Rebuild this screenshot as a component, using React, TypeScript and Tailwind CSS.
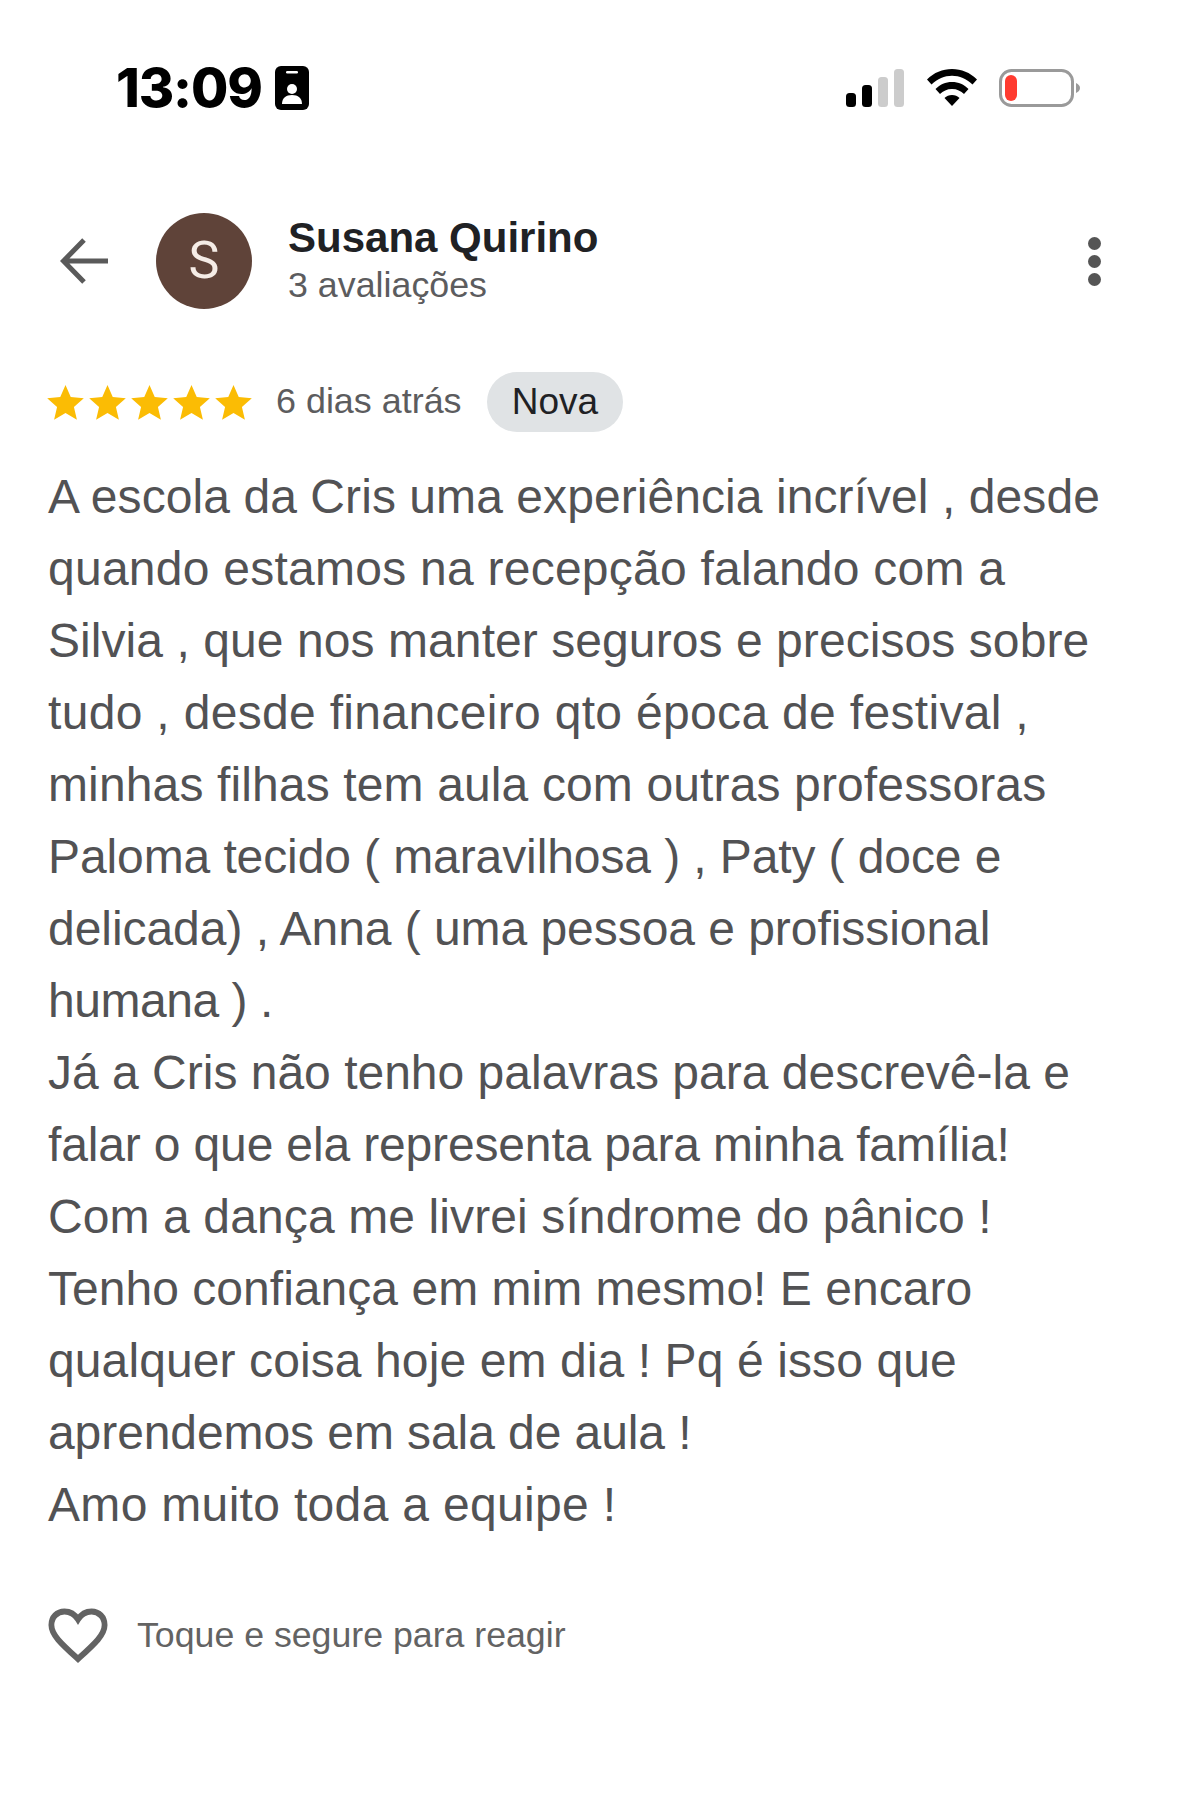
import React from 'react';

const lines = [
  { text: 'A escola da Cris uma experiência incrível , desde', cls: 'tracking-[0.07px]' },
  { text: 'quando estamos na recepção falando com a', cls: 'tracking-[0.25px]' },
  { text: 'Silvia , que nos manter seguros e precisos sobre', cls: 'tracking-[0.07px]' },
  { text: 'tudo , desde financeiro qto época de festival ,', cls: 'tracking-[0.32px]' },
  { text: 'minhas filhas tem aula com outras professoras', cls: 'tracking-[0.13px]' },
  { text: 'Paloma tecido ( maravilhosa ) , Paty ( doce e', cls: 'tracking-[-0.1px]' },
  { text: 'delicada) , Anna ( uma pessoa e profissional', cls: 'tracking-[-0.05px]' },
  { text: 'humana ) .', cls: 'tracking-[-0.46px]' },
  { text: 'Já a Cris não tenho palavras para descrevê-la e', cls: 'tracking-normal' },
  { text: 'falar o que ela representa para minha família!', cls: 'tracking-[-0.15px]' },
  { text: 'Com a dança me livrei síndrome do pânico !', cls: 'tracking-[0.11px]' },
  { text: 'Tenho confiança em mim mesmo! E encaro', cls: 'tracking-[0.03px]' },
  { text: 'qualquer coisa hoje em dia ! Pq é isso que', cls: 'tracking-[0.1px]' },
  { text: 'aprendemos em sala de aula !', cls: 'tracking-[-0.08px]' },
  { text: 'Amo muito toda a equipe !', cls: 'tracking-[0.32px]' },
];

const Star = () => (
  <svg viewBox="0 0 36 36" className="w-[37px] h-[37px] shrink-0">
    <path d="M18 1l5.100 11.700 12.700 1.200-9.600 8.400 2.900 12.500L18 28.200 6.900 34.800l2.900-12.500L.2 13.900l12.700-1.200z" fill="#fbbc04" />
  </svg>
);

const StatusBar = () => (
  <div className="h-[152px] flex items-center justify-between pl-[116px] pr-[98px] pt-[24px]">
    <div className="flex items-center gap-[13px]">
      <span className="text-[54px] leading-none font-extrabold text-black font-['Inter',sans-serif] tracking-[-1.1px]">13:09</span>
      <svg viewBox="0 0 34 44" className="w-[34px] h-[44px]">
        <rect width="34" height="44" rx="6" fill="#000" />
        <rect x="11" y="5" width="12" height="2.500" rx="1.200" fill="#fff" />
        <circle cx="17" cy="23" r="5" fill="#fff" />
        <path d="M7 38c0-6 4-9 10-9s10 3 10 9z" fill="#fff" />
      </svg>
    </div>
    <div className="flex items-center">
      <svg viewBox="0 0 60 38" className="w-[60px] h-[38px]">
        <rect x="0" y="24" width="10" height="14" rx="3.500" fill="#000" />
        <rect x="16" y="16" width="10" height="22" rx="3.500" fill="#000" />
        <rect x="32" y="8" width="10" height="30" rx="3.500" fill="#ccc" />
        <rect x="48" y="0" width="10" height="38" rx="3.500" fill="#ccc" />
      </svg>
      <svg viewBox="0 0 50 38" className="w-[50px] h-[38px] ml-[21px]">
        <path d="M25 0C15.500 0 7 3.500 0 10.500l4.500 5C10.500 9.700 17.500 6.700 25 6.700s14.500 3 20.500 8.800l4.500-5C43 3.500 34.500 0 25 0z" fill="#000" />
        <path d="M25 13c-6.500 0-12 2.500-16.500 7l4.500 5c3-3 7-5 12-5s9 2 12 5l4.500-5C37 15.500 31.500 13 25 13z" fill="#000" />
        <path d="M25 26c-3 0-5.500 1-7.500 3L25 37l7.500-8c-2-2-4.500-3-7.500-3z" fill="#000" />
      </svg>
      <svg viewBox="0 0 82 38" className="w-[82px] h-[38px] ml-[22px]">
        <rect x="1.500" y="1.500" width="72" height="35" rx="11" fill="none" stroke="#9a9a9a" strokeWidth="3" />
        <rect x="6" y="6" width="12" height="26" rx="6" fill="#ff3b30" />
        <path d="M77 14c2.500 1 4 3 4 5s-1.500 4-4 5z" fill="#9a9a9a" />
      </svg>
    </div>
  </div>
);

export default function App() {
  return (
    <div className="w-[1179px] h-[1795px] bg-white overflow-hidden font-['Liberation_Sans',Arial,sans-serif]">
      <StatusBar />

      <div className="flex items-center h-[96px] mt-[61px] pl-[60px] pr-[78px]">
        <svg viewBox="0 0 50 48" className="w-[50px] h-[48px] shrink-0">
          <path d="M48 24H4M24 3L3.500 24 24 45" fill="none" stroke="#5a5a5a" strokeWidth="5" />
        </svg>
        <div className="w-[96px] h-[96px] ml-[46px] rounded-full bg-[#5f4339] flex items-center justify-center text-[#f5ece6] text-[52px] font-['Roboto',sans-serif] shrink-0">
          S
        </div>
        <div className="ml-[36px] flex-1">
          <div className="text-[42px] leading-[48px] font-bold text-[#202124]">Susana Quirino</div>
          <div className="text-[35.8px] leading-[46px] text-[#5c5c5e]">3 avaliações</div>
        </div>
        <div className="flex flex-col gap-[5px]">
          <span className="w-[13px] h-[13px] rounded-full bg-[#555555]" />
          <span className="w-[13px] h-[13px] rounded-full bg-[#555555]" />
          <span className="w-[13px] h-[13px] rounded-full bg-[#555555]" />
        </div>
      </div>

      <div className="flex items-center h-[60px] mt-[63px] pl-[47px]">
        <div className="flex gap-[5px]">
          <Star />
          <Star />
          <Star />
          <Star />
          <Star />
        </div>
        <span className="ml-[24px] w-[186px] text-[35.9px] whitespace-nowrap text-[#5c5c5e]">6 dias atrás</span>
        <span className="ml-[25px] h-[60px] w-[136px] rounded-full bg-[#e0e3e5] flex items-center justify-center text-[37px] text-[#202124]">
          Nova
        </span>
      </div>

      <div className="mt-[29px] pl-[48px] text-[48px] leading-[72px] text-[#525254] whitespace-nowrap">
        {lines.map((l) => (
          <div key={l.text} className={l.cls}>
            {l.text}
          </div>
        ))}
      </div>

      <div className="flex items-center mt-[67px] pl-[48px]">
        <svg viewBox="0 0 62 56" className="w-[60px] h-[56px] shrink-0" preserveAspectRatio="none">
          <path d="M31 51C14 36 3.500 27 3.500 17 3.500 9 9.500 3.500 17 3.500c5.500 0 10.500 2.500 14 8 3.500-5.500 8.500-8 14-8 7.500 0 13.500 5.500 13.500 13.500 0 10-10.500 19-27.500 34z" fill="none" stroke="#636363" strokeWidth="6" />
        </svg>
        <span className="ml-[29px] text-[35.7px] text-[#636363]">Toque e segure para reagir</span>
      </div>
    </div>
  );
}
